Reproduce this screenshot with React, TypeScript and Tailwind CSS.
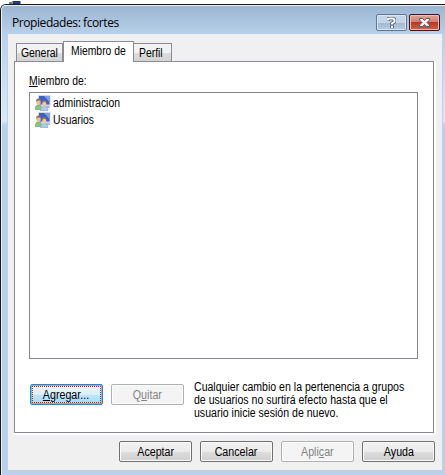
import type { ReactNode } from "react";

const U = ({ children }: { children: ReactNode }) => (
  <span className="underline decoration-1 underline-offset-[1px]">{children}</span>
);

const Label = ({ children }: { children: ReactNode }) => (
  <span className="inline-block origin-left scale-x-[0.865] whitespace-nowrap">{children}</span>
);

function UsersIcon() {
  return (
    <svg width="16" height="16" viewBox="0 0 16 16" className="shrink-0">
      <path d="M3 0h12.500v11H3z" fill="#d3d8e2" />
      <path d="M4 1h10.500v8.500H4z" fill="#3d5fc6" />
      <path d="M9 1h5.500v6z" fill="#7c9fe8" />
      <path d="M11 11h3.500l1 2H11z" fill="#b9bdc6" />
      <path d="M0 14.500C0 11.500 1.200 10 3.500 10S7 11.500 7 14.500z" fill="#8cc47e" stroke="#5d9455" strokeWidth=".5" />
      <ellipse cx="3.600" cy="7.300" rx="2.100" ry="2.700" fill="#e6bf97" />
      <path d="M1.200 7C.9 4.500 2 3.500 3.700 3.500s2.700 1 2.300 2.800L4.600 5.500 2.500 5.700z" fill="#8d7052" />
      <path d="M5.500 15.700c0-3 1.200-4.200 3.700-4.200s3.700 1.200 3.700 4.200z" fill="#a9cdee" stroke="#6b93bd" strokeWidth=".5" />
      <ellipse cx="9.200" cy="9" rx="2.100" ry="2.600" fill="#efcba5" />
      <path d="M6.800 8.800C6.400 6.300 7.500 5.200 9.200 5.200s2.800 1.100 2.400 3.600l-1-1.700-2.800.2z" fill="#9d7a56" />
    </svg>
  );
}

function Button({ children, kind = "normal" }: { children: ReactNode; kind?: "normal" | "disabled" | "focus" }) {
  const look = {
    normal: "border-[#707070] text-black bg-[linear-gradient(#f2f2f2_0%,#ebebeb_50%,#dddddd_51%,#cfcfcf_100%)] shadow-[inset_0_0_0_1px_#fafafa]",
    disabled: "border-[#adb2b5] text-[#838383] bg-[#f4f4f4] shadow-[inset_0_0_0_1px_#fcfcfc]",
    focus: "border-[#3c7fb1] text-black bg-[linear-gradient(#eaf6fd_0%,#d9f0fc_50%,#bee6fd_51%,#a7d9f5_100%)] shadow-[inset_0_0_0_1px_#48cdf5]",
  }[kind];
  return (
    <button className={"relative flex h-[21px] w-[73px] items-center justify-center rounded-[2px] border " + look}>
      <span className="inline-block translate-y-[1px] scale-x-[0.89] whitespace-nowrap">{children}</span>
      {kind === "focus" && <span className="absolute inset-[1px] border border-dotted border-[#a03020]" />}
    </button>
  );
}

export default function App() {
  return (
    <div className="h-[475px] w-[445px] overflow-hidden bg-white font-['Liberation_Sans',Arial,sans-serif] text-[12px] leading-[13px] text-black">
      <div className="flex h-[4px] bg-white pl-[9px]">
        <div className="mt-[2px] h-[2px] w-[3px] bg-[#777]" />
        <div className="mt-[1px] h-[3px] w-[9px] border-x border-[#999] bg-[#26387c]" />
      </div>
      <div className="h-[471px] w-[447px] rounded-tl-[6px] border-l border-t border-[#17191d] bg-[linear-gradient(#9bb5d1_0px,#b9d1ea_30px,#cbdef2_75px,#dbe9f7_116px,#b9d1ea_120px)]">
        <div className="flex h-[470px] flex-col rounded-tl-[5px] border-l border-t border-[#e7f0f8] pl-[6px]">
          <header className="flex h-[28px] shrink-0 pl-[4px]">
            <h1 className="mt-[9px] w-[364px] font-['Open_Sans','Noto_Sans',sans-serif] text-[12px] leading-[16px] tracking-[-0.42px]">Propiedades: fcortes</h1>
            <button className="mt-[8px] flex h-[17px] w-[31px] items-center justify-center rounded-[2px] border border-[#60758f] bg-[linear-gradient(#c4d5e8_50%,#9eb9d4_51%,#b6cce2)] shadow-[inset_0_0_0_1px_#d9e6f3]">
              <svg width="9" height="12" viewBox="0 0 9 12" fill="none">
                <path d="M1 4V2L2.500 1.500h3.500l1.500 1v2L5 6.500V8M5 8.500v2.700" stroke="#4d5567" strokeWidth="3.600" />
                <path d="M1 3.500V2L2.500 1.500h3.500l1.500 1v2L5 6.500v1M5 9v2" stroke="#ffffff" strokeWidth="2" />
              </svg>
            </button>
            <button className="ml-[2px] mt-[8px] flex h-[17px] w-[31px] items-center justify-center rounded-[2px] border border-[#43141c] bg-[linear-gradient(#e3a298_0%,#d47c6d_48%,#b73923_50%,#cb6550_100%)] shadow-[inset_0_0_0_1px_#edbcb3]">
              <svg width="11" height="9" viewBox="0 0 11 9">
                <path d="M.5.5h3L5.500 2.400 7.500.5h3V2L8 4.500 10.500 7v1.500h-3l-2-1.900-2 1.900h-3V7L3 4.500.5 2z" fill="#f4f4f6" stroke="#535666" />
              </svg>
            </button>
          </header>
          <main className="h-[436px] w-[434px] shrink-0 bg-[#f0f0f0] px-[6px] pt-[7px] shadow-[0_0_0_1px_#b9d1ea]">
            <nav className="flex h-[20px] items-end pl-[2px]">
              <div className="h-[18px] w-[47px] border border-b-0 border-[#898c95] bg-[linear-gradient(#f2f2f2_50%,#dddddd_51%,#d3d3d3)] pl-[4px] pt-[3px]"><Label>General</Label></div>
              <div className="relative z-10 h-[21px] w-[71px] translate-y-[1px] border border-b-0 border-[#898c95] bg-white pl-[7px] pt-[3px]"><Label>Miembro de</Label></div>
              <div className="ml-[-1px] h-[18px] w-[39px] border border-b-0 border-[#898c95] bg-[linear-gradient(#f2f2f2_50%,#dddddd_51%,#d3d3d3)] pl-[5px] pt-[3px]"><Label>Perfil</Label></div>
            </nav>
            <div className="h-[374px] w-[422px] border-b-[2px] border-r-[2px] border-white">
              <section className="h-[372px] w-[420px] border border-[#898c95] bg-white pl-[14px] pt-[13px]">
                <label className="block h-[17px]"><Label><U>M</U>iembro de:</Label></label>
                <ul className="h-[267px] w-[389px] border border-[#828790] pl-[5px] pt-[2px]">
                  <li className="flex h-[17px] gap-[2px]"><UsersIcon /><span className="pt-[2px]"><Label>administracion</Label></span></li>
                  <li className="flex h-[17px] gap-[2px]"><UsersIcon /><span className="pt-[2px]"><Label>Usuarios</Label></span></li>
                </ul>
                <div className="flex pl-[1px] pt-[21px]">
                  <div className="mt-[4px] flex gap-[8px]">
                    <Button kind="focus"><U>A</U>gregar...</Button>
                    <Button kind="disabled">Q<U>u</U>itar</Button>
                  </div>
                  <p className="ml-[10px] mt-[1px] origin-left scale-x-[0.88] whitespace-nowrap">Cualquier cambio en la pertenencia a grupos<br />de usuarios no surtirá efecto hasta que el<br />usuario inicie sesión de nuevo.</p>
                </div>
              </section>
            </div>
            <footer className="flex gap-[8px] pl-[105px] pt-[6px]">
              <Button>Aceptar</Button>
              <Button>Cancelar</Button>
              <Button kind="disabled">Apli<U>c</U>ar</Button>
              <Button>Ayuda</Button>
            </footer>
          </main>
        </div>
      </div>
    </div>
  );
}
